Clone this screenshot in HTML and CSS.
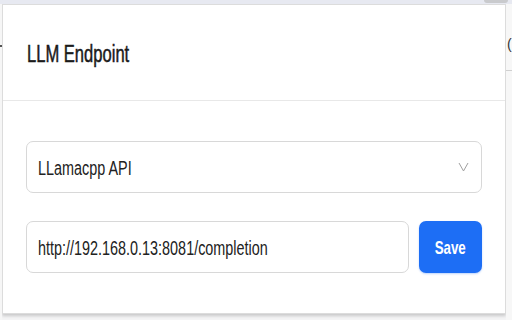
FILE: index.html
```html
<!DOCTYPE html>
<html>
<head>
<meta charset="utf-8">
<link rel="stylesheet" href="styles.css">
</head>
<body>
<div class="topbar"><div class="tab"></div></div>
<div class="stage">
  <div class="gutter-left"><span class="mark"></span></div>
  <div class="popup">
    <div class="header"><span class="title sq">LLM Endpoint</span></div>
    <div class="content">
      <div class="select">
        <span class="sq">LLamacpp API</span>
        <svg class="chev" width="11" height="10" viewBox="0 0 11 10"><path d="M1 1 L5.5 9 L10 1" fill="none" stroke="#a0a0a0" stroke-width="1"/></svg>
      </div>
      <div class="row">
        <div class="input"><span class="sq">http://192.168.0.13:8081/completion</span></div>
        <button class="save"><span class="sq-c">Save</span></button>
      </div>
    </div>
  </div>
  <div class="gutter-right"><span class="paren">(</span><div class="rline"></div></div>
</div>
</body>
</html>
```
FILE: styles.css
```css
html, body {
  margin: 0;
  padding: 0;
}
body {
  width: 512px;
  height: 320px;
  overflow: hidden;
  background: #f4f4f5;
  font-family: "Liberation Sans", Arial, sans-serif;
  color: #222;
}
.topbar {
  height: 4px;
  background: #e7e9f1;
  position: relative;
}
.tab {
  position: absolute;
  left: 484px;
  top: 0;
  width: 24px;
  height: 3px;
  background: #c9cacd;
  border-radius: 0 0 3px 3px;
}
.stage {
  display: flex;
  height: 316px;
}
.gutter-left {
  width: 2px;
  background: #f6f6f6;
  position: relative;
}
.mark {
  position: absolute;
  left: 0;
  top: 41px;
  width: 2px;
  height: 2px;
  background: #555;
}
.popup {
  width: 502px;
  height: 308px;
  background: #fff;
  border: 1px solid #dcdcdc;
  box-shadow: 0 2px 3px rgba(0,0,0,0.18);
  display: flex;
  flex-direction: column;
}
.gutter-right {
  flex: 1;
  position: relative;
  background: #f7f7f7;
}
.paren {
  position: absolute;
  left: 1px;
  top: 32px;
  font-size: 14px;
  color: #333;
}
.rline {
  position: absolute;
  left: 0;
  right: 0;
  top: 66px;
  height: 1px;
  background: #d0d0d0;
}
.header {
  height: 95px;
  border-bottom: 1px solid #e8e8e8;
  display: flex;
  align-items: center;
  padding-left: 24px;
}
.sq {
  display: inline-block;
  transform: scaleX(0.72);
  transform-origin: left center;
  white-space: nowrap;
}
.sq-c {
  display: inline-block;
  transform: scaleX(0.7);
  transform-origin: center center;
  white-space: nowrap;
}
.title {
  font-size: 23px;
  font-weight: 400;
  -webkit-text-stroke: 0.5px #1a1a1a;
  color: #1a1a1a;
  padding-top: 4px;
}
.content {
  padding: 40px 23px 0 23px;
  display: flex;
  flex-direction: column;
  gap: 28px;
}
.select, .input {
  border: 1px solid #d8d8d8;
  border-radius: 7px;
  display: flex;
  align-items: center;
  padding: 3px 0 0 11px;
  box-sizing: border-box;
  height: 52px;
  font-size: 20px;
  color: #222;
}
.select {
  justify-content: space-between;
  padding-right: 12px;
}
.chev {
  margin-top: -3px;
}
.row {
  display: flex;
  gap: 10px;
}
.input {
  flex: 1;
  overflow: hidden;
}
.save {
  width: 63px;
  height: 52px;
  border: none;
  border-radius: 7px;
  background: #1d6ef5;
  color: #fff;
  font-family: "Liberation Sans", Arial, sans-serif;
  font-size: 19px;
  font-weight: 700;
  padding: 2px 0 0 0;
  box-shadow: 0 1px 2px rgba(29,110,245,0.3);
}
```
